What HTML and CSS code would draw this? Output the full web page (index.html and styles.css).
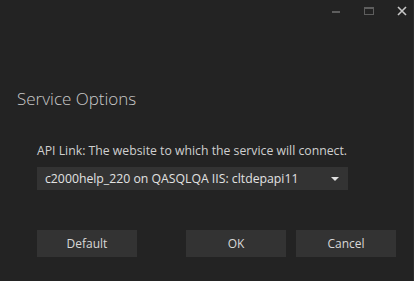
FILE: index.html
```html
<!DOCTYPE html>
<html lang="en">
<head>
    <meta charset="UTF-8">
    <title>Service Options</title>
    <link rel="stylesheet" href="styles.css">
</head>
<body>
    <div class="window">
        <div class="titlebar">
            <button class="win-btn" title="Minimize">
                <svg width="10" height="10" viewBox="0 0 10 10"><rect x="1" y="5" width="8" height="2" fill="#5e5e5e"/></svg>
            </button>
            <button class="win-btn" title="Maximize">
                <svg width="10" height="10" viewBox="0 0 10 10"><rect x="0.5" y="1.5" width="9" height="7" fill="none" stroke="#5e5e5e" stroke-width="1"/><rect x="0.5" y="1" width="9" height="2" fill="#5e5e5e"/></svg>
            </button>
            <button class="win-btn" title="Close">
                <svg width="10" height="10" viewBox="0 0 10 10"><path d="M1 1 L9 9 M9 1 L1 9" stroke="#c8c8c8" stroke-width="1.6"/></svg>
            </button>
        </div>

        <h1 class="title">Service Options</h1>

        <div class="content">
            <label class="field-label">API Link: The website to which the service will connect.</label>
            <div class="select">
                <span class="select-value">c2000help_220 on QASQLQA IIS: cltdepapi11</span>
                <svg class="select-arrow" width="8" height="4" viewBox="0 0 8 4"><path d="M0 0 L8 0 L4 4 Z" fill="#e0e0e0"/></svg>
            </div>
        </div>

        <div class="actions">
            <button class="btn">Default</button>
            <div class="spacer"></div>
            <button class="btn">OK</button>
            <button class="btn">Cancel</button>
        </div>
    </div>
</body>
</html>
```

FILE: styles.css
```css
* {
    margin: 0;
    padding: 0;
    box-sizing: border-box;
}

body {
    background: #232323;
    font-family: 'Open Sans', 'Noto Sans', sans-serif;
    color: #d8d8d8;
    width: 414px;
    height: 281px;
    overflow: hidden;
}

.window {
    height: 281px;
    display: flex;
    flex-direction: column;
    border-right: 1px solid #2c2c2c;
}

.titlebar {
    display: flex;
    justify-content: flex-end;
    gap: 11px;
    height: 22px;
}

.win-btn {
    width: 22px;
    height: 22px;
    background: none;
    border: none;
    display: flex;
    align-items: center;
    justify-content: center;
}

.title {
    font-size: 17px;
    font-weight: 300;
    color: #c9c9c9;
    padding-left: 17px;
    margin-top: 65px;
    line-height: 24px;
}

.content {
    padding: 0 37px;
    margin-top: 31px;
}

.field-label {
    display: block;
    font-size: 12.25px;
    color: #cfcfcf;
    line-height: 18px;
}

.select {
    margin-top: 7px;
    width: 311px;
    height: 23px;
    background: #333333;
    display: flex;
    align-items: center;
    justify-content: space-between;
    padding: 0 8px 0 8px;
    font-size: 12.25px;
    color: #e2e2e2;
}

.select-arrow {
    margin-right: 1px;
}

.actions {
    display: flex;
    gap: 10px;
    padding: 0 17px 0 37px;
    margin-top: 40px;
}

.spacer {
    flex: 1;
}

.btn {
    width: 100px;
    height: 27px;
    background: #333333;
    border: none;
    color: #d8d8d8;
    font-family: 'Open Sans', 'Noto Sans', sans-serif;
    font-size: 12px;
}
```
